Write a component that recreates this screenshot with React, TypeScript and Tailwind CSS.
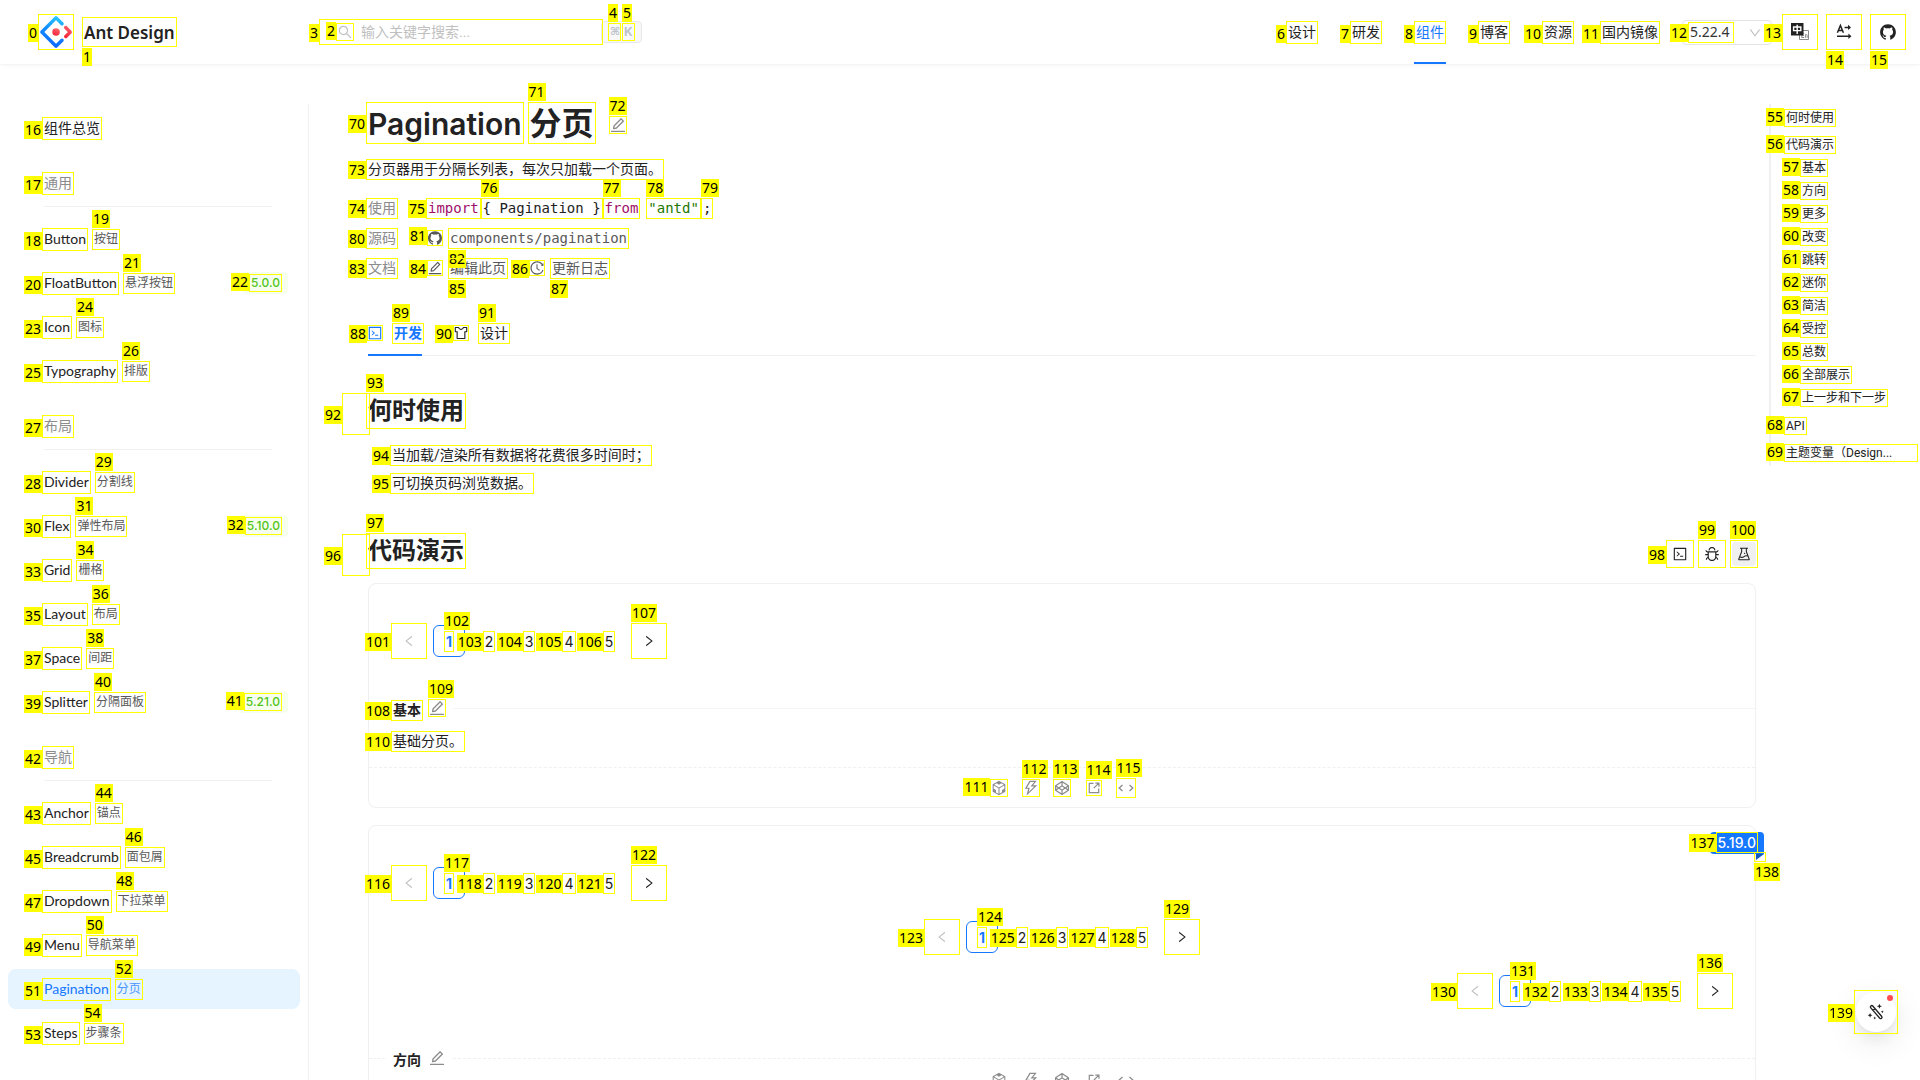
import React, { ReactNode } from "react";
import type { IconType } from "react-icons";
import {
  AiOutlineBug,
  AiOutlineCode,
  AiOutlineCodeSandbox,
  AiOutlineCodepen,
  AiOutlineDown,
  AiOutlineEdit,
  AiOutlineExperiment,
  AiOutlineGithub,
  AiOutlineHistory,
  AiOutlineLeft,
  AiOutlineRight,
  AiOutlineSearch,
  AiOutlineSkin,
  AiOutlineThunderbolt,
} from "react-icons/ai";

type Side = "left" | "mid" | "top" | "bottom";

const sideClass: Record<Side, string> = {
  left: "right-[calc(100%+1px)] bottom-0",
  mid: "right-[calc(100%+1px)] top-[calc(50%-8px)]",
  top: "-left-px bottom-[calc(100%+2px)]",
  bottom: "-left-px top-[calc(100%+2px)]",
};

/* Yellow outline with its number, drawn over the element that holds it. */
function Frame({ n, side = "left", className = "-inset-0.5" }: { n: number; side?: Side; className?: string }) {
  return (
    <span className={`pointer-events-none absolute z-10 border border-[#ffff00] ${className}`}>
      <span
        className={`absolute bg-[#ffff00] px-px font-['Noto_Sans',sans-serif] text-[14px] leading-[18px] font-normal whitespace-nowrap text-black ${sideClass[side]}`}
      >
        {n}
      </span>
    </span>
  );
}

function Mark({ n, side, className = "leading-[17px]", children }: { n: number; side?: Side; className?: string; children?: ReactNode }) {
  return (
    <span className={`relative inline-block whitespace-nowrap ${className}`}>
      {children}
      <Frame n={n} side={side} />
    </span>
  );
}

/* An outline icon; its glyph fills the box, so the drawing is a little larger than the box. */
function Glyph({ icon: Icon, large, n, side }: { icon: IconType; large?: boolean; n?: number; side?: Side }) {
  return (
    <span className={`relative flex shrink-0 items-center justify-center ${large ? "size-4" : "size-[14px]"}`}>
      <Icon className={`shrink-0 ${large ? "size-[18px]" : "size-4"}`} />
      {n !== undefined && <Frame n={n} side={side} className="-inset-px" />}
    </span>
  );
}

function Logo() {
  return (
    <svg viewBox="0 0 200 200" className="block size-8" aria-hidden="true">
      <defs>
        <linearGradient id="lg2" x1="69%" y1="0%" x2="54%" y2="108%">
          <stop offset="0%" stopColor="#29CDFF" />
          <stop offset="38%" stopColor="#148EFF" />
          <stop offset="100%" stopColor="#0A60FF" />
        </linearGradient>
        <linearGradient id="lg3" x1="69%" y1="-12%" x2="16%" y2="105%">
          <stop offset="0%" stopColor="#FA816E" />
          <stop offset="41%" stopColor="#F74A5C" />
          <stop offset="100%" stopColor="#F51D2C" />
        </linearGradient>
      </defs>
      <path
        fill="url(#lg2)"
        d="M91.588 4.177L4.18 91.513c-4.7 4.695-4.7 12.279 0 16.974l87.408 87.336c4.7 4.696 12.29 4.696 16.989 0l36.648-36.618c4.209-4.205 4.209-11.023 0-15.228-4.208-4.205-11.031-4.205-15.24 0l-27.783 27.76c-1.17 1.169-2.945 1.169-4.114 0l-69.802-69.744c-1.17-1.169-1.17-2.942 0-4.111l69.802-69.744c1.17-1.169 2.944-1.169 4.114 0l27.783 27.76c4.209 4.205 11.032 4.205 15.24 0 4.209-4.205 4.209-11.022 0-15.227L108.58 4.056c-4.718-4.594-12.311-4.557-16.992.12z"
      />
      <path
        fill="url(#lg3)"
        d="M153.686 135.855c4.208 4.205 11.031 4.205 15.24 0l27.034-27.012c4.7-4.696 4.7-12.28 0-16.974l-27.27-27.15c-4.218-4.2-11.043-4.195-15.254.013-4.209 4.205-4.209 11.022 0 15.227l18.418 18.403c1.17 1.169 1.17 2.943 0 4.111l-18.168 18.154c-4.209 4.205-4.209 11.023 0 15.228z"
      />
      <ellipse cx="100.5" cy="100.4" rx="23.6" ry="23.6" fill="url(#lg3)" />
    </svg>
  );
}

function LangIcon() {
  return (
    <svg viewBox="0 0 20 20" className="size-5" aria-hidden="true">
      <path d="M9.5 8.5h9v9h-9z" fill="#fff" stroke="#888" />
      <path d="M11.8 11v4.8M11.8 11.3h2.4M11.8 13.4h2M11.8 15.5h2.4M15.4 15.8v-3.2c1.2-.6 1.8 0 1.8 1v2.2" stroke="#888" fill="none" />
      <path d="M1 1h12.5v12.5H1z" fill="#222" />
      <path d="M7.2 2.8v9.2M3.6 5h7.2v3.6H3.6z" stroke="#fff" strokeWidth="1.4" fill="none" />
    </svg>
  );
}

function DirectionIcon() {
  return (
    <svg viewBox="0 0 20 20" className="size-5 fill-none stroke-[#222]" strokeWidth="1.5" aria-hidden="true">
      <path d="M3.4 10.8L6.4 3.4l3 7.4M4.4 8.6h4M10.6 5.4h5M3 14.2h13" />
      <path d="M14 2.8l3 2.6-3 2.6zM14.4 11.4l3 2.8-3 2.8z" fill="#222" stroke="none" />
    </svg>
  );
}

function ExternalIcon() {
  return (
    <svg viewBox="0 0 14 14" className="size-3 fill-none stroke-current" strokeWidth="1.4" aria-hidden="true">
      <path d="M6.5 1.5h-5v11h11V7.5M8.5 1.2h4.3v4.3M12.6 1.4L6.8 7.2" />
    </svg>
  );
}

function BracketsIcon() {
  return (
    <svg viewBox="0 0 16 16" className="size-4 fill-none stroke-current" strokeWidth="1.3" aria-hidden="true">
      <path d="M4.5 5L1.2 8l3.3 3M11.5 5l3.3 3-3.3 3" />
    </svg>
  );
}

function WandIcon() {
  return (
    <svg viewBox="0 0 20 20" className="size-[18px] fill-none stroke-[#222]" strokeWidth="1.5" aria-hidden="true">
      <path d="M4.3 3.3a1.4 1.4 0 012.1 0L16.4 15a1.5 1.5 0 01-2.2 2L4.2 5.4a1.5 1.5 0 01.1-2.1zM9 6.4L6.6 8.4" />
      <path
        d="M13.8.8l.8 2 2 .8-2 .8-.8 2-.8-2-2-.8 2-.8zM3.4 11l.8 1.9 1.9.8-1.9.8-.8 1.9-.8-1.9-1.9-.8 1.9-.8zM17 8.2l.5 1.1 1.1.5-1.1.5-.5 1.1-.5-1.1-1.1-.5 1.1-.5zM8.6 15l.5 1.1 1.1.5-1.1.5-.5 1.1-.5-1.1-1.1-.5 1.1-.5z"
        fill="#222"
        stroke="none"
      />
    </svg>
  );
}

const nav: [number, string][] = [
  [6, "设计"],
  [7, "研发"],
  [8, "组件"],
  [9, "博客"],
  [10, "资源"],
];

function Header() {
  return (
    <header className="flex h-16 shrink-0 items-center bg-white pr-4 shadow-[0_1px_2px_0_rgba(0,0,0,0.03),0_1px_6px_-1px_rgba(0,0,0,0.02),0_2px_4px_0_rgba(0,0,0,0.02)]">
      <a href="#" className="flex w-[321px] items-center gap-3 pl-10">
        <Mark n={0} side="mid" className="">
          <Logo />
        </Mark>
        <Mark n={1} side="bottom" className="pt-0.5 font-['Noto_Sans',sans-serif] text-[17px] leading-6 font-semibold text-[#222]">
          Ant Design
        </Mark>
      </a>
      <div className="flex items-center">
        <label className="relative flex h-[22px] w-[280px] items-center gap-2 pl-4 text-[#c4c4c4]">
          <span className="relative inline-block">
            <AiOutlineSearch className="block size-4" />
            <Frame n={2} className="-inset-px" />
          </span>
          <input
            type="search"
            aria-label="搜索"
            placeholder="输入关键字搜索..."
            className="min-w-0 flex-1 bg-transparent text-[14px] leading-[22px] outline-none placeholder:text-[#bfbfbf]"
          />
          <Frame n={3} side="mid" />
        </label>
        <kbd className="flex h-[22px] w-[41px] items-center gap-[5px] rounded border border-[#e8e8e8] bg-[#f8f8f8] pl-2 text-[12px] font-bold text-[#bdc3cb]">
          <Mark n={4} side="top" className="w-[9px] font-['DejaVu_Sans',sans-serif] text-[11px] leading-[14px]">
            ⌘
          </Mark>
          <Mark n={5} side="top" className="font-['Inter',sans-serif] leading-[14px]">
            K
          </Mark>
        </kbd>
      </div>
      <nav className="ml-auto flex gap-8">
        {nav.map(([n, text]) => (
          <a
            key={n}
            href="#"
            className={
              n === 8
                ? "flex h-16 items-center border-y-2 border-t-transparent border-b-[#1677ff] px-0.5 text-[#1677ff]"
                : "flex h-16 items-center px-0.5"
            }
          >
            <Mark n={n} className="leading-[19px]">
              {text}
            </Mark>
          </a>
        ))}
      </nav>
      <a href="#" className="ml-7 flex">
        <Mark n={11} className="leading-[19px]">
          国内镜像
        </Mark>
      </a>
      <div className="relative ml-6 flex">
        <select
          aria-label="版本"
          className="h-[25px] w-[90px] appearance-none rounded border border-[#e4e4e4] bg-white pl-[7px] font-['Noto_Sans',sans-serif] text-[14px] leading-[22px] text-[#333]"
        >
          <option>5.22.4</option>
        </select>
        <AiOutlineDown className="pointer-events-none absolute top-1.5 right-2.5 size-3.5 text-[#bfbfbf]" />
        <Frame n={12} className="top-0.5 left-1.5 h-[21px] w-[46px]" />
      </div>
      <div className="ml-3 flex gap-3">
        <button type="button" aria-label="English" className="relative flex size-8 items-center justify-center">
          <LangIcon />
          <Frame n={13} side="mid" />
        </button>
        <button type="button" aria-label="RTL" className="relative flex size-8 items-center justify-center">
          <DirectionIcon />
          <Frame n={14} side="bottom" />
        </button>
        <a href="#" aria-label="GitHub" className="relative flex size-8 items-center justify-center">
          <AiOutlineGithub className="size-[18px]" />
          <Frame n={15} side="bottom" />
        </a>
      </div>
    </header>
  );
}

type Item = { n: number; name: string; cn: string; tag?: string; tagN?: number };

const groups: { n: number; title: string; items: Item[] }[] = [
  {
    n: 17,
    title: "通用",
    items: [
      { n: 18, name: "Button", cn: "按钮" },
      { n: 20, name: "FloatButton", cn: "悬浮按钮", tag: "5.0.0", tagN: 22 },
      { n: 23, name: "Icon", cn: "图标" },
      { n: 25, name: "Typography", cn: "排版" },
    ],
  },
  {
    n: 27,
    title: "布局",
    items: [
      { n: 28, name: "Divider", cn: "分割线" },
      { n: 30, name: "Flex", cn: "弹性布局", tag: "5.10.0", tagN: 32 },
      { n: 33, name: "Grid", cn: "栅格" },
      { n: 35, name: "Layout", cn: "布局" },
      { n: 37, name: "Space", cn: "间距" },
      { n: 39, name: "Splitter", cn: "分隔面板", tag: "5.21.0", tagN: 41 },
    ],
  },
  {
    n: 42,
    title: "导航",
    items: [
      { n: 43, name: "Anchor", cn: "锚点" },
      { n: 45, name: "Breadcrumb", cn: "面包屑" },
      { n: 47, name: "Dropdown", cn: "下拉菜单" },
      { n: 49, name: "Menu", cn: "导航菜单" },
      { n: 51, name: "Pagination", cn: "分页" },
      { n: 53, name: "Steps", cn: "步骤条" },
    ],
  },
];

function Sidebar() {
  return (
    <aside className="w-[309px] shrink-0 border-r border-[#f0f0f0] pt-1">
      <a href="#" className="mx-2 mb-1 flex h-10 items-center pl-9">
        <Mark n={16} className="leading-[19px]">
          组件总览
        </Mark>
      </a>
      {groups.map((g) => (
        <section key={g.n}>
          <h3 className="mr-9 mb-3 ml-11 flex border-b border-[#f0f0f0] pt-[22px] pb-[13px] text-[#8c8c8c]">
            <Mark n={g.n} className="leading-[19px]">
              {g.title}
            </Mark>
          </h3>
          <ul>
            {g.items.map((it) => {
              const active = it.name === "Pagination";
              return (
                <li key={it.n}>
                  <a
                    href="#"
                    className={`mx-2 mb-1 flex h-10 items-center gap-2 rounded-lg pr-3 pl-9 ${active ? "bg-[#e6f4ff] text-[#1677ff]" : ""}`}
                  >
                    <Mark n={it.n} className="pb-0.5 font-['Lato',sans-serif] leading-[17px]">
                      {it.name}
                    </Mark>
                    <Mark n={it.n + 1} side="top" className={`text-[12px] leading-[17px] ${active ? "text-[#4a96ff]" : "text-[#595959]"}`}>
                      {it.cn}
                    </Mark>
                    {it.tag && (
                      <span className="ml-auto flex h-[22px] items-center rounded bg-[#f6ffed] px-2 font-['Inter',sans-serif] text-[12px] font-medium text-[#52c41a]">
                        <Mark n={it.tagN!} className="leading-[14px]">
                          {it.tag}
                        </Mark>
                      </span>
                    )}
                  </a>
                </li>
              );
            })}
          </ul>
        </section>
      ))}
    </aside>
  );
}

const pageMarks = [1, 2, 3, 4, 5];

function Pagination({ start, className = "" }: { start: number; className?: string }) {
  return (
    <nav aria-label="分页" className={`flex gap-2 font-['Inter',sans-serif] ${className}`}>
      <button type="button" aria-label="上一页" disabled className="relative flex size-8 items-center justify-center text-[#bfbfbf]">
        <AiOutlineLeft className="size-3.5" />
        <Frame n={start} side="mid" />
      </button>
      {pageMarks.map((p) => (
        <button
          key={p}
          type="button"
          className={
            p === 1
              ? "flex size-8 items-center justify-center rounded-md border border-[#1677ff] font-bold text-[#1677ff]"
              : "flex size-8 items-center justify-center"
          }
        >
          <Mark n={start + p} side={p === 1 ? "top" : "left"}>
            {p}
          </Mark>
        </button>
      ))}
      <button type="button" aria-label="下一页" className="relative flex size-8 items-center justify-center">
        <AiOutlineRight className="size-3.5" />
        <Frame n={start + 6} side="top" />
      </button>
    </nav>
  );
}

function Actions({ marked }: { marked?: boolean }) {
  const num = (n: number) => (marked ? n : undefined);
  return (
    <div className="flex h-[39px] items-center justify-center gap-4 text-[#8c8c8c]">
      <button type="button" aria-label="CodeSandbox" className="flex w-4">
        <Glyph icon={AiOutlineCodeSandbox} large n={num(111)} />
      </button>
      <button type="button" aria-label="StackBlitz" className="flex w-[15px]">
        <Glyph icon={AiOutlineThunderbolt} large n={num(112)} side="top" />
      </button>
      <button type="button" aria-label="CodePen" className="flex w-[18px]">
        <Glyph icon={AiOutlineCodepen} large n={num(113)} side="top" />
      </button>
      <button type="button" aria-label="新窗口打开" className="flex w-[14px]">
        <span className="relative">
          <ExternalIcon />
          {marked && <Frame n={114} side="top" />}
        </span>
      </button>
      <button type="button" aria-label="显示代码" className="flex w-4">
        <span className="relative">
          <BracketsIcon />
          {marked && <Frame n={115} side="top" />}
        </span>
      </button>
    </div>
  );
}

function CardTitle({ title, marked }: { title: string; marked?: boolean }) {
  const line = marked ? "border-t border-[#f5f5f5]" : "border-t border-dashed border-[#f0f0f0]";
  return (
    <div className="flex h-[22px]">
      <span className={`mt-[9px] w-4 ${line}`} />
      <div className="flex items-center gap-2 px-2">
        <h3 className="relative leading-[17px] font-semibold">
          {title}
          {marked && <Frame n={108} />}
        </h3>
        <a href="#" aria-label="编辑" className="mb-1 block text-[#8c8c8c]">
          <Glyph icon={AiOutlineEdit} large n={marked ? 109 : undefined} side="top" />
        </a>
      </div>
      <span className={`mt-[9px] flex-1 ${line}`} />
    </div>
  );
}

function Main() {
  return (
    <main className="min-w-0 flex-1 pr-[13px] pl-[59px]">
      <div className="flex items-center">
        <h1 className="flex gap-2 font-['Inter','Noto_Sans_CJK_SC',sans-serif] text-[30px] font-semibold">
          <Mark n={70} side="mid" className="pt-0.5 leading-9">
            Pagination
          </Mark>
          <Mark n={71} side="top" className="pt-0.5 text-[32px] leading-9">
            分页
          </Mark>
        </h1>
        <a href="#" aria-label="编辑此页" className="mt-1 ml-4 text-[#8c8c8c]">
          <Glyph icon={AiOutlineEdit} large n={72} side="top" />
        </a>
      </div>
      <p className="mt-[15px] flex h-6 items-center">
        <Mark n={73}>分页器用于分隔长列表，每次只加载一个页面。</Mark>
      </p>

      <dl className="mt-3 grid auto-rows-[30px] grid-cols-[60px_1fr] items-center">
        <dt className="flex text-[#8c8c8c]">
          <Mark n={74}>使用</Mark>
        </dt>
        <dd>
          <code className="flex gap-1 font-['DejaVu_Sans_Mono',monospace] text-[14px]">
            <Mark n={75} className="leading-[17px] text-[#a0106a]">
              import
            </Mark>
            <Mark n={76} side="top">
              {"{ Pagination }"}
            </Mark>
            <Mark n={77} side="top" className="mr-1.5 leading-[17px] text-[#a0106a]">
              from
            </Mark>
            <Mark n={78} side="top" className="leading-[17px] text-[#237804]">
              "antd"
            </Mark>
            <Mark n={79} side="top">;</Mark>
          </code>
        </dd>
        <dt className="flex text-[#8c8c8c]">
          <Mark n={80}>源码</Mark>
        </dt>
        <dd>
          <a href="#" className="flex items-center gap-2 text-[#595959]">
            <Glyph icon={AiOutlineGithub} n={81} />
            <Mark n={82} side="bottom" className="font-['DejaVu_Sans_Mono',monospace] leading-[17px]">
              components/pagination
            </Mark>
          </a>
        </dd>
        <dt className="flex text-[#8c8c8c]">
          <Mark n={83}>文档</Mark>
        </dt>
        <dd className="flex gap-6 text-[#595959]">
          <a href="#" className="flex items-center gap-2">
            <Glyph icon={AiOutlineEdit} n={84} side="mid" />
            <Mark n={85} side="bottom">编辑此页</Mark>
          </a>
          <a href="#" className="flex items-center gap-2">
            <Glyph icon={AiOutlineHistory} n={86} side="mid" />
            <Mark n={87} side="bottom">更新日志</Mark>
          </a>
        </dd>
      </dl>

      <div role="tablist" className="mt-[27px] flex h-[46px] gap-8 border-b border-[#f0f0f0]">
        <button type="button" role="tab" aria-selected="true" className="flex h-[46px] items-center gap-3 border-y-2 border-t-transparent border-b-[#1677ff] font-semibold text-[#1677ff]">
          <Glyph icon={AiOutlineCode} n={88} side="mid" />
          <Mark n={89} side="top">开发</Mark>
        </button>
        <button type="button" role="tab" aria-selected="false" className="flex h-[46px] items-center gap-3">
          <Glyph icon={AiOutlineSkin} n={90} side="mid" />
          <Mark n={91} side="top">设计</Mark>
        </button>
      </div>

      <h2 className="relative mt-[39px] text-[24px] leading-8 font-semibold">
        <Mark n={93} side="top" className="leading-8">
          何时使用
        </Mark>
        <Frame n={92} side="mid" className="-top-0.5 -left-[26px] h-[42px] w-7" />
      </h2>
      <ul className="mt-3.5 pl-6">
        <li className="flex h-7 items-center">
          <Mark n={94}>当加载/渲染所有数据将花费很多时间时；</Mark>
        </li>
        <li className="flex h-7 items-center">
          <Mark n={95}>可切换页码浏览数据。</Mark>
        </li>
      </ul>

      <div className="mt-[38px] flex items-end justify-between">
        <h2 className="relative text-[24px] leading-8 font-semibold">
          <Mark n={97} side="top" className="leading-8">
            代码演示
          </Mark>
          <Frame n={96} side="mid" className="-top-px -left-[26px] h-[42px] w-7" />
        </h2>
        <div className="mb-px flex gap-2">
          <button type="button" aria-label="展开代码" className="relative flex size-6 items-center justify-center">
            <AiOutlineCode className="size-4" />
            <Frame n={98} side="mid" />
          </button>
          <button type="button" aria-label="调试" className="relative flex size-6 items-center justify-center">
            <AiOutlineBug className="size-4" />
            <Frame n={99} side="top" />
          </button>
          <button type="button" aria-label="实验" className="relative flex size-6 items-center justify-center rounded bg-[#f0f0f0]">
            <AiOutlineExperiment className="size-4" />
            <Frame n={100} side="top" />
          </button>
        </div>
      </div>

      <div className="mt-4 flex flex-col gap-[17px]">
        <article className="rounded-lg border border-[#f0f0f0]">
          <div className="px-6 pt-[41px] pb-[42px]">
            <Pagination start={101} />
          </div>
          <CardTitle title="基本" marked />
          <p className="mt-[9px] mb-[15px] flex h-[22px] items-center px-6">
            <Mark n={110}>基础分页。</Mark>
          </p>
          <div className="border-t border-dashed border-[#f0f0f0]">
            <Actions marked />
          </div>
        </article>

        <article className="relative rounded-lg border border-[#f0f0f0]">
          <div className="flex flex-col gap-[22px] px-6 pt-[41px] pb-[42px]">
            <Pagination start={116} />
            <Pagination start={123} className="self-center" />
            <Pagination start={130} className="self-end" />
          </div>
          <div className="-mb-[11px]">
            <CardTitle title="方向" />
          </div>
          <Actions />
          <div className="absolute top-1.5 -right-[9px] h-[22px] rounded-t rounded-bl bg-[#1677ff] px-2 font-['Inter',sans-serif] leading-[22px] font-medium text-white">
            <Mark n={137}>5.19.0</Mark>
            <span className="absolute top-full right-0 size-2">
              <svg viewBox="0 0 8 8" className="block size-2 fill-[#1059bf]" aria-hidden="true">
                <path d="M0 0h8L0 6z" />
              </svg>
              <Frame n={138} side="bottom" className="-top-0.5 -left-0.5 h-2.5 w-3" />
            </span>
          </div>
        </article>
      </div>
    </main>
  );
}

const nested = ["基本", "方向", "更多", "改变", "跳转", "迷你", "简洁", "受控", "总数", "全部展示", "上一步和下一步"];

function Toc() {
  return (
    <nav aria-label="目录" className="w-[151px] shrink-0 text-[12px]">
      <ul className="border-l-2 border-[#f0f0f0] pl-[15px]">
        <li>
          <a href="#" className="flex h-[27px] items-center">
            <Mark n={55} className="leading-[14px]">何时使用</Mark>
          </a>
        </li>
        <li>
          <a href="#" className="flex h-[27px] items-center">
            <Mark n={56} className="leading-[14px]">代码演示</Mark>
          </a>
          <ul className="-mt-0.5 pb-[3px] pl-4">
            {nested.map((t, i) => (
              <li key={t}>
                <a href="#" className="flex h-[23px] items-center">
                  <Mark n={57 + i} className="leading-[14px]">{t}</Mark>
                </a>
              </li>
            ))}
          </ul>
        </li>
        <li>
          <a href="#" className="flex h-[27px] items-center">
            <Mark n={68} className="leading-[14px]">API</Mark>
          </a>
        </li>
        <li>
          <a href="#" className="flex h-[27px] items-center">
            <Mark n={69} className="w-[130px] leading-[14px]">主题变量（Design...</Mark>
          </a>
        </li>
      </ul>
    </nav>
  );
}

export default function App() {
  return (
    <div className="flex h-screen flex-col overflow-hidden bg-white font-['Roboto','Noto_Sans_CJK_SC',sans-serif] text-[14px] leading-[22px] text-[#222]">
      <Header />
      <div className="flex min-h-0 flex-1 pt-10">
        <Sidebar />
        <Main />
        <Toc />
      </div>
      <button
        type="button"
        aria-label="主题"
        className="fixed right-6 bottom-12 flex size-10 items-center justify-center rounded-full bg-white shadow-[0_6px_16px_0_rgba(0,0,0,0.08),0_3px_6px_-4px_rgba(0,0,0,0.12),0_9px_28px_8px_rgba(0,0,0,0.05)]"
      >
        <WandIcon />
        <span className="absolute top-[3px] right-[3px] size-1.5 rounded-full bg-[#ff4d4f]" />
        <Frame n={139} side="mid" />
      </button>
    </div>
  );
}
